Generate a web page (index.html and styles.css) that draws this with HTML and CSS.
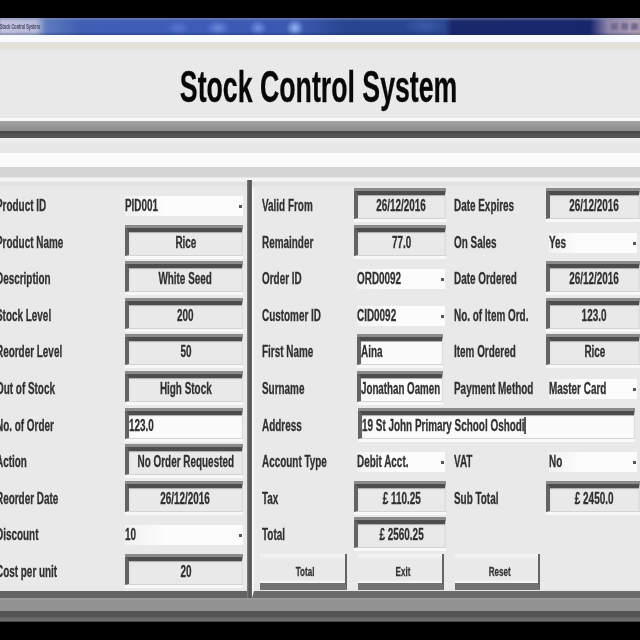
FILE: index.html
```html
<!DOCTYPE html>
<html lang="en">
<head>
<meta charset="utf-8">
<title>Stock Control System</title>
<link rel="stylesheet" href="styles.css">
</head>
<body>
<div class="window">
  <div class="titlebar"><span class="caption">Stock Control System</span><span class="controls"><i></i><i></i><i></i></span></div>
  <div class="menubar"></div>
  <header class="header"><h1 class="t">Stock Control System</h1></header>
  <div class="ridge"></div>
  <div class="toolbar"></div>
  <main class="panels">
    <section class="left">
      <label><span class="t">Product ID</span></label><div class="combo"><span class="t">PID001</span></div>
      <label><span class="t">Product Name</span></label><div class="field"><span class="t">Rice</span></div>
      <label><span class="t">Description</span></label><div class="field"><span class="t">White Seed</span></div>
      <label><span class="t">Stock Level</span></label><div class="field"><span class="t">200</span></div>
      <label><span class="t">Reorder Level</span></label><div class="field"><span class="t">50</span></div>
      <label><span class="t">Out of Stock</span></label><div class="field"><span class="t">High Stock</span></div>
      <label><span class="t">No. of Order</span></label><div class="field entry"><span class="t">123.0</span></div>
      <label><span class="t">Action</span></label><div class="field"><span class="t">No Order Requested</span></div>
      <label><span class="t">Reorder Date</span></label><div class="field"><span class="t">26/12/2016</span></div>
      <label><span class="t">Discount</span></label><div class="combo"><span class="t">10</span></div>
      <label><span class="t">Cost per unit</span></label><div class="field"><span class="t">20</span></div>
    </section>
    <div class="divider"></div>
    <section class="right">
      <div class="grid">
        <label><span class="t">Valid From</span></label><div class="field"><span class="t">26/12/2016</span></div>
        <label><span class="t">Date Expires</span></label><div class="field wide"><span class="t">26/12/2016</span></div>
        <label><span class="t">Remainder</span></label><div class="field"><span class="t">77.0</span></div>
        <label><span class="t">On Sales</span></label><div class="combo"><span class="t">Yes</span></div>
        <label><span class="t">Order ID</span></label><div class="combo"><span class="t">ORD0092</span></div>
        <label><span class="t">Date Ordered</span></label><div class="field wide"><span class="t">26/12/2016</span></div>
        <label><span class="t">Customer ID</span></label><div class="combo"><span class="t">CID0092</span></div>
        <label><span class="t">No. of Item Ord.</span></label><div class="field wide"><span class="t">123.0</span></div>
        <label><span class="t">First Name</span></label><div class="field entry inset"><span class="t">Aina</span></div>
        <label><span class="t">Item Ordered</span></label><div class="field wide"><span class="t">Rice</span></div>
        <label><span class="t">Surname</span></label><div class="field entry inset tight"><span class="t">Jonathan Oamen</span></div>
        <label><span class="t">Payment Method</span></label><div class="combo"><span class="t">Master Card</span></div>
        <label><span class="t">Address</span></label><div class="field entry inset address"><span class="t">19 St John Primary School Oshodi</span><b class="caret"></b></div>
        <label><span class="t">Account Type</span></label><div class="combo"><span class="t">Debit Acct.</span></div>
        <label><span class="t">VAT</span></label><div class="combo"><span class="t">No</span></div>
        <label><span class="t">Tax</span></label><div class="field"><span class="t">£ 110.25</span></div>
        <label><span class="t">Sub Total</span></label><div class="field wide"><span class="t">£ 2450.0</span></div>
        <label><span class="t">Total</span></label><div class="field"><span class="t">£ 2560.25</span></div>
      </div>
      <div class="buttons">
        <button><span class="t">Total</span></button>
        <button><span class="t">Exit</span></button>
        <button><span class="t">Reset</span></button>
      </div>
    </section>
  </main>
  <footer class="frame"></footer>
</div>
</body>
</html>
```
FILE: styles.css
```css
* { box-sizing: border-box; }
body {
  margin: 0;
  background: #000;
  color: #303030;
  font: bold 16px/18px "Liberation Sans", Arial, sans-serif;
}
.window {
  width: 640px;
  height: 640px;
  padding-top: 18px;
  overflow: hidden;
}
.t {
  display: block;
  flex: none;
  white-space: nowrap;
  transform: scaleX(.62);
  transform-origin: left center;
  -webkit-text-stroke: .3px currentColor;
}
.titlebar {
  display: flex;
  justify-content: space-between;
  align-items: center;
  height: 17px;
  background:
    radial-gradient(ellipse 9px 9px at 295px 10px, #91b2f4, transparent),
    radial-gradient(ellipse 9px 8px at 258px 10px, #6c8ee0, transparent),
    radial-gradient(ellipse 12px 8px at 218px 10px, #6786d8, transparent),
    radial-gradient(ellipse 12px 8px at 178px 10px, #5773cf, transparent),
    radial-gradient(ellipse 22px 9px at 425px 8px, #3c5aa8, transparent),
    linear-gradient(90deg, #c4c3df 0, #b4b9dc 36px, #607cbe 46px, #405eb4 80px, #3d5cb8 200px, #3c58b0 300px, #284590 345px, #2a4590 445px, #18286b 452px, #17276c 590px, #8f86ac 608px, #b9a5b5 640px);
  box-shadow: inset 0 2px 2px rgba(130, 140, 175, .55), inset 0 -2px 2px rgba(25, 40, 95, .3);
}
.caption {
  width: 40px;
  font: bold 8px/10px "Liberation Sans", sans-serif;
  color: #45445f;
  white-space: nowrap;
  transform: scaleX(.48);
  transform-origin: left center;
  filter: blur(.7px);
}
.controls {
  display: flex;
  gap: 3px;
  padding-right: 2px;
}
.controls i {
  width: 7px;
  height: 7px;
  background: #746b91;
  filter: blur(1px);
}
.menubar {
  height: 15px;
  background: linear-gradient(#f8fbff 0 7px, #e4e1d9 7px 12px, #e5e5e2 15px);
}
.header {
  display: flex;
  justify-content: center;
  height: 71px;
  padding: 12px 3px 0 0;
  background: #e9e9e9;
  border-bottom: 3px solid #f8f8f8;
}
h1 {
  margin: 0;
  font-size: 44px;
  line-height: 50px;
  color: #080808;
}
h1.t { transform: scaleX(.607); transform-origin: center; }
.ridge {
  height: 17px;
  background: linear-gradient(#a2a2a2 0, #8c8c8c 10px, #484848 10px, #585858 17px);
}
.toolbar {
  height: 50px;
  background: linear-gradient(#eee 0, #e7e7e7 8px 15px, #fbfbfb 15px 29px, #d5d5d5 29px 39px, #f4f4f4 40px 43px, #e1e1e1 44px 47px, #e8e8e8 48px);
}
.panels {
  display: grid;
  grid-template-columns: 247px 5px 388px;
  height: 409px;
  background: #e9e9e9;
}
.left {
  display: grid;
  grid-template-columns: 129px 118px;
  grid-template-rows: repeat(11, 36.6px);
  margin-left: -4px;
  border-bottom: 7px solid #636363;
}
.divider {
  margin-top: -8px;
  background: linear-gradient(90deg, #858585, #585858 2px 4px, #777);
}
.right {
  border-left: 2px solid #f8f8f8;
  border-bottom: 7px solid #6b6b6b;
}
.grid {
  display: grid;
  grid-template-columns: 93px 99px 93px 101px;
  grid-template-rows: repeat(10, 36.6px);
}
.grid label { padding-left: 8px; }
label { padding-top: 9px; }
.field {
  position: relative;
  display: flex;
  justify-content: center;
  width: 118px;
  height: 31px;
  padding-top: 2px;
  border: solid #4d4d4d;
  border-width: 7px 1px 1px 4px;
  border-left-color: #636363;
  border-right-color: #ddd;
  border-bottom-color: #d4d4d4;
  background: #e9e9e9;
  box-shadow: 0 3px #f8f8f8, inset 0 1px 1px #aaa;
}
.field::before {
  content: "";
  position: absolute;
  inset: -7px -1px auto -4px;
  height: 3px;
  background: #8b8b8b;
}
.field .t { transform-origin: center; }
.grid .field { width: 92px; margin-left: 7px; }
.grid .wide { width: 94px; }
.field.entry {
  justify-content: flex-start;
  background: #fbfbfb;
}
.field.entry .t { transform-origin: left center; }
.grid .inset {
  width: 86px;
  margin-left: 10px;
}
.tight.entry .t { transform: scaleX(.61); }
.grid .address {
  grid-column: 2 / 5;
  width: 277px;
  margin-left: 11px;
}
.caret {
  position: absolute;
  left: 162px;
  top: 2px;
  width: 2px;
  height: 17px;
  background: #555;
}
.combo {
  position: relative;
  display: flex;
  width: 118px;
  height: 20px;
  margin-top: 8px;
  padding-top: 1px;
  background: linear-gradient(90deg, #f1f1f1, #fcfcfc 35%);
}
.combo::after {
  content: "";
  position: absolute;
  right: 1px;
  top: 9px;
  width: 3px;
  height: 3px;
  background: #555;
}
.grid .combo {
  width: 88px;
  margin-left: 10px;
}
.buttons {
  display: grid;
  grid-template-columns: 87px 86px 85px;
  gap: 11px;
  height: 36px;
  padding-left: 6px;
}
button {
  display: flex;
  justify-content: center;
  height: 36px;
  margin: 0;
  padding: 9px 0 0 6px;
  border: 0;
  border-right: 2px solid #646464;
  border-bottom: 7px solid #727272;
  background: linear-gradient(#f5f5f5 0, #e9e9e9 6px 26px, #f7f7f7 28px);
  color: #343434;
  font: bold 13px/18px "Liberation Sans", Arial, sans-serif;
}
button .t { transform: scaleX(.62); transform-origin: center; }
.frame {
  height: 25px;
  background: linear-gradient(#a0a0a0 0, #929292 4px 14px, #555 14px 20px, #6b6b6b 21px 24px, #222);
}
```
